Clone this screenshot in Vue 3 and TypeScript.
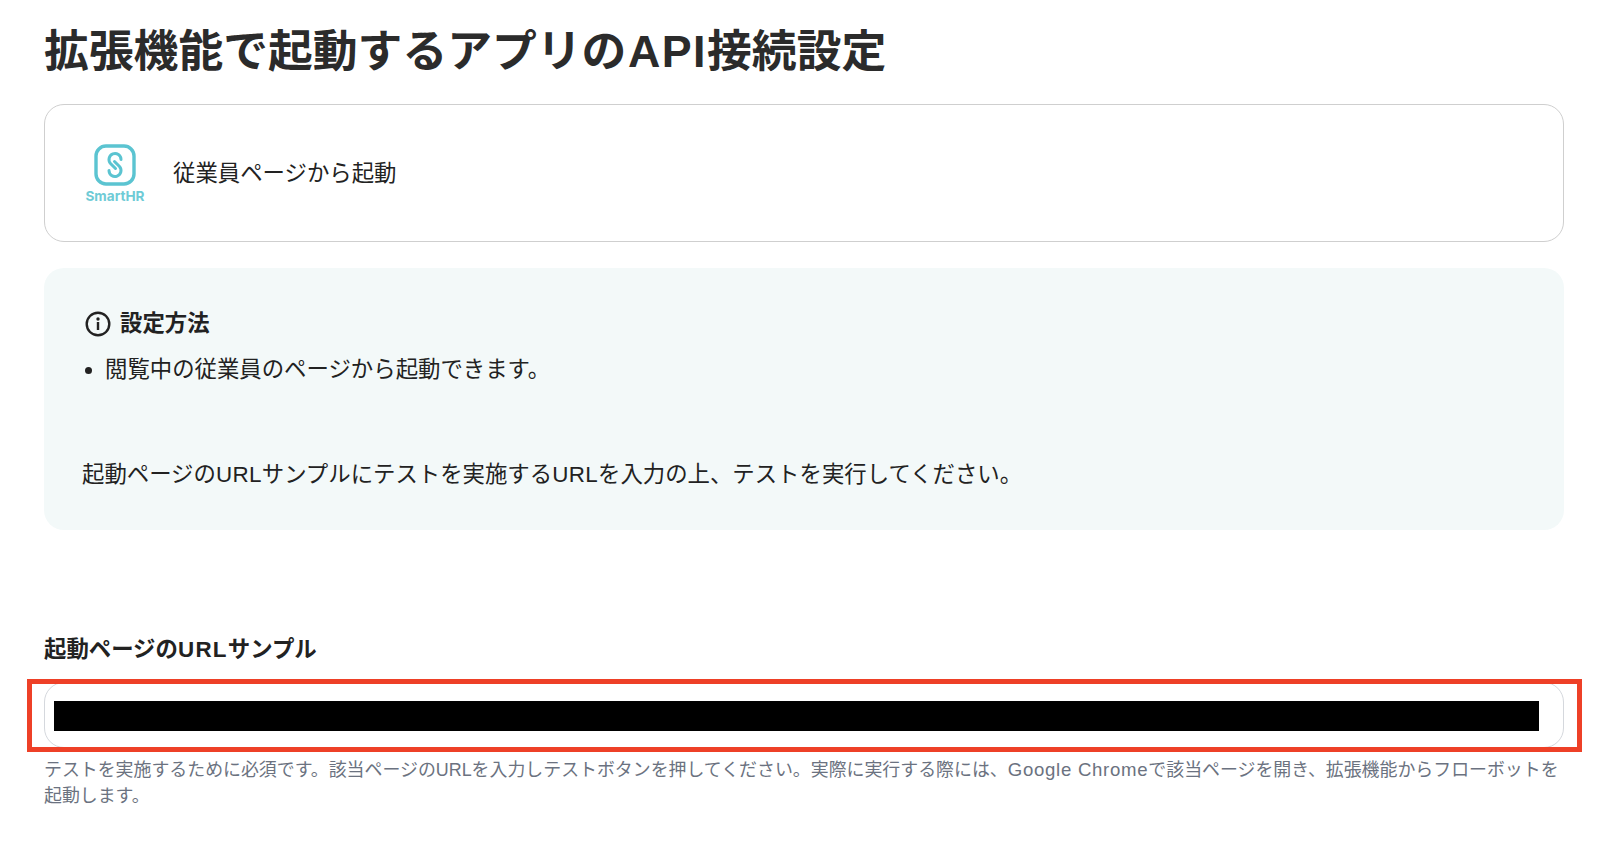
<script setup lang="ts">
const title = '拡張機能で起動するアプリの'
</script>

<template>
  <main class="page">
    <h1 class="title">{{ title }}<span class="lat-title">API</span>接続設定</h1>

    <section class="app-card">
      <div class="logo">
        <svg class="logo-mark" width="42" height="42" viewBox="0 0 42 42" fill="none">
          <rect x="2" y="2" width="38" height="38" rx="10" stroke="#5BC4D1" stroke-width="3.4" />
          <g stroke="#5BC4D1" stroke-width="3" stroke-linecap="round" stroke-linejoin="round">
            <path d="M27 15.500 a6 6 0 1 0 -10.500 4 l5 5" />
            <path d="M15 26.500 a6 6 0 1 0 10.500 -4 l-5 -5" />
          </g>
        </svg>
        <span class="logo-text">SmartHR</span>
      </div>
      <span class="app-name">従業員ページから起動</span>
    </section>

    <section class="info">
      <h2 class="info-head">
        <svg width="26" height="26" viewBox="0 0 26 26" fill="none">
          <circle cx="13" cy="13" r="11.300" stroke="#222" stroke-width="2.400" />
          <circle cx="13" cy="8" r="1.700" fill="#222" />
          <rect x="11.800" y="11" width="2.400" height="8" fill="#222" />
        </svg>
        設定方法
      </h2>
      <ul class="info-list">
        <li>閲覧中の従業員のページから起動できます。</li>
      </ul>
      <p class="info-note">起動ページの<span class="lat-note">URL</span>サンプルにテストを実施する<span class="lat-note">URL</span>を入力の上、テストを実行してください。</p>
    </section>

    <section class="field">
      <label class="field-label">起動ページの<span class="lat-label">URL</span>サンプル</label>
      <div class="input-wrap">
        <div class="input">
          <div class="redaction"></div>
        </div>
        <div class="highlight"></div>
      </div>
      <p class="help">テストを実施するために必須です。該当ページのURLを入力しテストボタンを押してください。実際に実行する際には、<span class="lat-help">Google Chrome</span>で該当ページを開き、拡張機能からフローボットを起動します。</p>
    </section>
  </main>
</template>

<style>
html, body { background: #fff; }
</style>

<style scoped>
.page {
  box-sizing: border-box;
  width: 1606px;
  height: 846px;
  padding: 21px 42px 0 44px;
  overflow: hidden;
  font-family: "Liberation Sans", "Noto Sans CJK JP", sans-serif;
  color: #222;
}
.title {
  margin: 0;
  font-size: 44.800px;
  line-height: 60px;
  font-weight: 700;
  color: #2b2b2b;
}
.lat-title {
  margin-left: 1.500px;
  letter-spacing: 1.500px;
}
.app-card {
  box-sizing: border-box;
  height: 138px;
  margin-top: 23px;
  padding: 0 40px;
  display: flex;
  align-items: center;
  gap: 28px;
  border: 1px solid #cfcfcf;
  border-radius: 20px;
}
.logo {
  width: 60px;
  padding-top: 2px;
  display: flex;
  flex-direction: column;
  align-items: center;
}
.logo-mark { display: block; }
.logo-text {
  margin-top: 1px;
  font-family: Inter, sans-serif;
  font-size: 13.600px;
  line-height: 18px;
  font-weight: 700;
  color: #6FCBD6;
  white-space: nowrap;
}
.app-name {
  margin-top: 1px;
  font-size: 22.400px;
  line-height: 32px;
  color: #222;
}
.info {
  box-sizing: border-box;
  height: 262px;
  margin-top: 26px;
  padding: 40px 38px 0;
  background: #f3f9f9;
  border-radius: 20px;
}
.info-head {
  margin: 0;
  display: flex;
  align-items: center;
  gap: 9px;
  padding-left: 3px;
  font-size: 22.400px;
  line-height: 32px;
  font-weight: 700;
}
.info-list {
  margin: 14px 0 0;
  padding: 0 0 0 3px;
  list-style: none;
  font-size: 22.400px;
  line-height: 32px;
}
.info-list li {
  display: flex;
  align-items: center;
  gap: 13px;
}
.info-list li::before {
  content: "";
  flex: none;
  width: 7px;
  height: 7px;
  border-radius: 50%;
  background: #222;
}
.info-note {
  margin: 73px 0 0;
  font-size: 22.400px;
  line-height: 32px;
}
.lat-note { letter-spacing: 0.350px; }
.field { margin-top: 104px; }
.field-label {
  display: block;
  font-size: 22.400px;
  line-height: 32px;
  font-weight: 700;
}
.lat-label { letter-spacing: 1.300px; }
.input-wrap {
  position: relative;
  margin-top: 16px;
}
.input {
  box-sizing: border-box;
  height: 66px;
  padding: 18px 24px 0 9px;
  border: 1px solid #d5d8dd;
  border-radius: 20px;
}
.redaction {
  height: 30px;
  background: #000;
}
.highlight {
  position: absolute;
  left: -17px;
  right: -18px;
  top: -3px;
  bottom: -4px;
  border: 5px solid #ee4027;
  pointer-events: none;
}
.help {
  margin: 9px 0 0;
  font-size: 17.920px;
  line-height: 26px;
  color: #6b7280;
}
.lat-help {
  font-size: 18.600px;
  letter-spacing: 0.720px;
}
</style>
